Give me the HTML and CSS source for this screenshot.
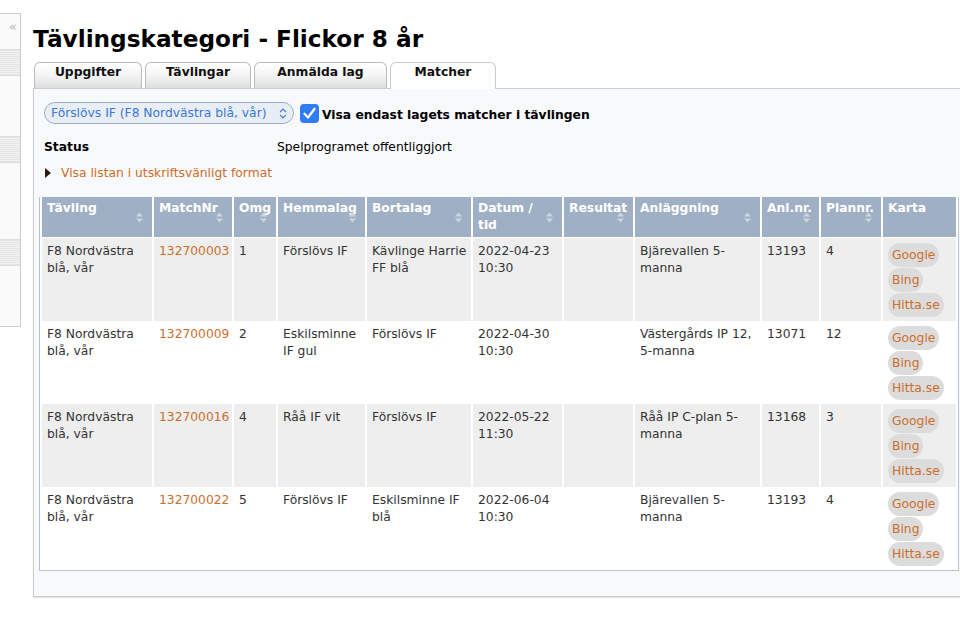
FILE: index.html
```html
<!DOCTYPE html>
<html lang="sv">
<head>
<meta charset="utf-8">
<title>Tävlingskategori - Flickor 8 år</title>
<link rel="stylesheet" href="styles.css">
</head>
<body>
<div class="page">
  <aside class="sidebar">
    <div class="collapse">«</div>
    <div class="band"></div>
    <div class="gap g1"></div>
    <div class="band"></div>
    <div class="gap g2"></div>
    <div class="band"></div>
    <div class="gap g3"></div>
  </aside>
  <main class="main">
    <h1 class="title">Tävlingskategori - Flickor 8 år</h1>
    <nav class="tabs">
      <a class="tab w1">Uppgifter</a>
      <a class="tab w2">Tävlingar</a>
      <a class="tab w3">Anmälda lag</a>
      <a class="tab active w4">Matcher</a>
    </nav>
    <section class="panel">
      <div class="filter">
        <span class="select">Förslövs IF (F8 Nordvästra blå, vår)
          <svg class="updown" width="8" height="11" viewBox="0 0 8 11"><path d="M1 4.2L4 1.2L7 4.2M1 6.8L4 9.8L7 6.8" fill="none" stroke="#3a78d6" stroke-width="1.2"/></svg>
        </span>
        <span class="checkbox"><svg width="19" height="19" viewBox="0 0 19 19"><path d="M4.5 9.8L8 13.5L14.6 4.8" fill="none" stroke="#fff" stroke-width="2.3" stroke-linecap="round" stroke-linejoin="round"/></svg></span>
        <span class="check-label">Visa endast lagets matcher i tävlingen</span>
      </div>
      <div class="status"><span class="status-key">Status</span><span>Spelprogramet offentliggjort</span></div>
      <a class="print"><span class="arrow"></span>Visa listan i utskriftsvänligt format</a>
      <table class="matches">
        <thead>
          <tr>
            <th class="c1">Tävling<svg class="sort" viewBox="0 0 9 11"><path d="M4.5 0.5L8 4.5H1Z M4.5 10.5L8 6.5H1Z"/></svg></th>
            <th class="c2">MatchNr<svg class="sort" viewBox="0 0 9 11"><path d="M4.5 0.5L8 4.5H1Z M4.5 10.5L8 6.5H1Z"/></svg></th>
            <th class="c3">Omg<svg class="sort" viewBox="0 0 9 11"><path d="M4.5 0.5L8 4.5H1Z M4.5 10.5L8 6.5H1Z"/></svg></th>
            <th class="c4">Hemmalag<svg class="sort" viewBox="0 0 9 11"><path d="M4.5 0.5L8 4.5H1Z M4.5 10.5L8 6.5H1Z"/></svg></th>
            <th class="c5">Bortalag<svg class="sort" viewBox="0 0 9 11"><path d="M4.5 0.5L8 4.5H1Z M4.5 10.5L8 6.5H1Z"/></svg></th>
            <th class="c6">Datum / tid<svg class="sort" viewBox="0 0 9 11"><path d="M4.5 0.5L8 4.5H1Z M4.5 10.5L8 6.5H1Z"/></svg></th>
            <th class="c7">Resultat<svg class="sort" viewBox="0 0 9 11"><path d="M4.5 0.5L8 4.5H1Z M4.5 10.5L8 6.5H1Z"/></svg></th>
            <th class="c8">Anläggning<svg class="sort" viewBox="0 0 9 11"><path d="M4.5 0.5L8 4.5H1Z M4.5 10.5L8 6.5H1Z"/></svg></th>
            <th class="c9">Anl.nr.<svg class="sort" viewBox="0 0 9 11"><path d="M4.5 0.5L8 4.5H1Z M4.5 10.5L8 6.5H1Z"/></svg></th>
            <th class="c10">Plannr.<svg class="sort" viewBox="0 0 9 11"><path d="M4.5 0.5L8 4.5H1Z M4.5 10.5L8 6.5H1Z"/></svg></th>
            <th class="c11">Karta</th>
          </tr>
        </thead>
        <tbody>
          <tr class="odd">
            <td>F8 Nordvästra blå, vår</td><td><a class="lnk">132700003</a></td><td>1</td><td>Förslövs IF</td><td>Kävlinge Harrie FF blå</td><td>2022-04-23 10:30</td><td></td><td>Bjärevallen 5-manna</td><td>13193</td><td>4</td>
            <td class="map"><a class="pill">Google</a><a class="pill">Bing</a><a class="pill">Hitta.se</a></td>
          </tr>
          <tr>
            <td>F8 Nordvästra blå, vår</td><td><a class="lnk">132700009</a></td><td>2</td><td>Eskilsminne IF gul</td><td>Förslövs IF</td><td>2022-04-30 10:30</td><td></td><td>Västergårds IP 12, 5-manna</td><td>13071</td><td>12</td>
            <td class="map"><a class="pill">Google</a><a class="pill">Bing</a><a class="pill">Hitta.se</a></td>
          </tr>
          <tr class="odd">
            <td>F8 Nordvästra blå, vår</td><td><a class="lnk">132700016</a></td><td>4</td><td>Råå IF vit</td><td>Förslövs IF</td><td>2022-05-22 11:30</td><td></td><td>Råå IP C-plan 5-manna</td><td>13168</td><td>3</td>
            <td class="map"><a class="pill">Google</a><a class="pill">Bing</a><a class="pill">Hitta.se</a></td>
          </tr>
          <tr>
            <td>F8 Nordvästra blå, vår</td><td><a class="lnk">132700022</a></td><td>5</td><td>Förslövs IF</td><td>Eskilsminne IF blå</td><td>2022-06-04 10:30</td><td></td><td>Bjärevallen 5-manna</td><td>13193</td><td>4</td>
            <td class="map"><a class="pill">Google</a><a class="pill">Bing</a><a class="pill">Hitta.se</a></td>
          </tr>
        </tbody>
      </table>
    </section>
  </main>
</div>
</body>
</html>
```
FILE: styles.css
```css
html, body {
  margin: 0;
  padding: 0;
  background: #fff;
  overflow: hidden;
}
body {
  font-family: "DejaVu Sans", Verdana, sans-serif;
  font-size: 12.3px;
  color: #333;
  width: 960px;
  height: 624px;
}
.page {
  display: flex;
  align-items: flex-start;
}
.sidebar {
  flex: 0 0 20px;
  margin-top: 13px;
  border: 1px solid #ccc;
  border-left: none;
  background: #fafafa;
  display: flex;
  flex-direction: column;
}
.collapse {
  height: 35px;
  line-height: 26px;
  text-align: right;
  padding-right: 3px;
  color: #aaa;
  font-size: 13px;
  font-family: "DejaVu Serif", serif;
}
.band {
  height: 25px;
  border-top: 1px solid #ddd;
  border-bottom: 1px solid #ddd;
  background: repeating-linear-gradient(to bottom, #e4e4e4 0, #e4e4e4 1px, #f2f2f2 1px, #f2f2f2 2px);
}
.g1 { height: 60px; }
.g2 { height: 76px; }
.g3 { height: 60px; }

.main {
  margin-left: 12px;
  flex: 0 0 940px;
}
.title {
  margin: 0;
  padding-top: 24px;
  font-size: 23.2px;
  line-height: 30px;
  height: 38px;
  font-weight: bold;
  color: #000;
}
.tabs {
  display: flex;
  gap: 3px;
  padding-left: 1px;
  height: 26px;
  position: relative;
  z-index: 1;
}
.tab {
  display: block;
  box-sizing: border-box;
  height: 26px;
  border: 1px solid #bbb;
  border-bottom: none;
  border-radius: 6px 6px 0 0;
  background: linear-gradient(to bottom, #ffffff 0%, #f4f4f4 50%, #dedede 100%);
  text-align: center;
  font-weight: bold;
  color: #111;
  line-height: 19px;
}
.tab.active {
  background: #fff;
  border-color: #ccc;
  height: 27px;
}
.w1 { width: 108px; }
.w2 { width: 106px; }
.w3 { width: 133px; }
.w4 { width: 106px; }

.panel {
  box-sizing: border-box;
  height: 509px;
  border: 1px solid #ccc;
  border-right: none;
  background: #f8f9fa;
  padding: 13px 0 0 5px;
  box-shadow: 0 1px 1px #e4e4e4;
}
.filter {
  display: flex;
  align-items: center;
  height: 22px;
  padding-left: 5px;
}
.select {
  box-sizing: border-box;
  display: flex;
  align-items: center;
  height: 22px;
  width: 250px;
  padding: 0 6px 0 6px;
  border: 1px solid #9aaecb;
  border-radius: 11px;
  background: #e9eef5;
  color: #3a78d6;
  white-space: nowrap;
}
.updown {
  margin-left: auto;
}
.checkbox {
  width: 19px;
  height: 19px;
  margin-left: 6px;
  background: #2f7cf6;
  border-radius: 4px;
  display: block;
}
.checkbox svg { display: block; }
.check-label {
  margin-left: 3px;
  font-weight: bold;
  color: #000;
  padding-top: 3px;
}
.status {
  display: flex;
  margin-top: 13px;
  padding-left: 5px;
  line-height: 20px;
  color: #000;
}
.status-key {
  font-weight: bold;
  width: 233px;
}
.print {
  display: flex;
  align-items: center;
  margin-top: 6px;
  padding-left: 5px;
  line-height: 20px;
  color: #cc6e2b;
}
.arrow {
  width: 0;
  height: 0;
  border-left: 6px solid #2a1a10;
  border-top: 5px solid transparent;
  border-bottom: 5px solid transparent;
  margin: 0 10px 0 1px;
}

.matches {
  margin-top: 14px;
  width: 920px;
  border-collapse: separate;
  border-spacing: 2px 0;
  background: #fff;
  border: 1px solid #b5c2d2;
  border-top: none;
  table-layout: fixed;
}
.matches th {
  box-sizing: border-box;
  position: relative;
  background: #a0b0c4;
  color: #fff;
  font-weight: bold;
  text-align: left;
  vertical-align: top;
  padding: 3px 14px 3px 5px;
  line-height: 17px;
  height: 40px;
  border-bottom: 1px solid #fff;
}
.matches th.c11 { padding-right: 5px; }
.sort {
  position: absolute;
  right: 8px;
  top: 50%;
  margin-top: -5px;
  width: 9px;
  height: 11px;
  fill: #cdd5df;
}
.c1 { width: 110px; }
.c2 { width: 78px; }
.c3 { width: 42px; }
.c4 { width: 87px; }
.c5 { width: 104px; }
.c6 { width: 89px; }
.c7 { width: 69px; }
.c8 { width: 125px; }
.c9 { width: 57px; }
.c10 { width: 60px; }
.c11 { width: 73px; }
.matches td {
  vertical-align: top;
  padding: 5px 2px 4px 5px;
  line-height: 17px;
  height: 74px;
  color: #333;
}
.matches tr.odd td { background: #eeeeee; }
.lnk { color: #cc6e2b; }
.pill {
  display: block;
  width: fit-content;
  height: 24px;
  line-height: 24px;
  padding: 0 4px;
  margin-bottom: 1px;
  border-radius: 12px;
  background: #dcdcdc;
  color: #cc6e2b;
}
.pill:last-child { margin-bottom: 0; }
```
